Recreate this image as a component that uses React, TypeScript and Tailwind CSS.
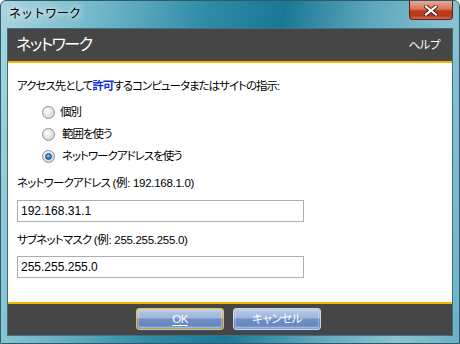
import React from "react";

const font = { fontFamily: '"Liberation Sans", "Noto Sans CJK JP", sans-serif' };

function Radio({ checked, label, labelPad }: { checked?: boolean; label: string; labelPad: string }) {
  return (
    <div className="flex h-[22px] items-center pl-[25px]">
      <div className="flex h-[13px] w-[13px] items-center justify-center rounded-full border border-[#8f9090] bg-[radial-gradient(circle_at_40%_35%,#ffffff_0%,#e6e6e6_45%,#c8c8c8_100%)]">
        {checked && (
          <div className="h-[7px] w-[7px] rounded-full border border-[#1d4f86] bg-[radial-gradient(circle_at_45%_40%,#8fd0ff_0%,#2a86d8_50%,#0d4f98_100%)]" />
        )}
      </div>
      <span className={`${labelPad} text-[11.5px] leading-[16px] tracking-[-1px] text-black`}>{label}</span>
    </div>
  );
}

function Btn({ children, def }: { children: React.ReactNode; def?: boolean }) {
  return (
    <div className="flex flex-col">
      <div
        className={`relative flex h-[22px] w-[88px] items-center justify-center overflow-hidden rounded-[3px] border ${
          def ? "border-[#f6c21f]" : "border-[#c9d6ee]"
        } bg-[linear-gradient(to_bottom,#b9cae6_0%,#9db4dc_45%,#6f8fc6_50%,#6788c0_80%,#8aa6d4_100%)]`}
      >
        <div className="absolute inset-[1px] rounded-[2px] border border-[#dbe5f6]/40" />
        <span className="relative text-[11.5px] leading-[14px] tracking-[-0.5px] text-white">{children}</span>
      </div>
      <div className="mx-[2px] h-[1px] bg-[#2c4f86]" />
    </div>
  );
}

export default function App() {
  return (
    <div
      style={font}
      className="relative flex h-[344px] w-[460px] flex-col overflow-hidden rounded-t-[6px] border border-[#2c5b6a] bg-[linear-gradient(100deg,#a9d5df_0%,#6fb6c8_20%,#2f8ba6_40%,#1a7896_55%,#5ea7bd_72%,#8bc2d1_88%,#6cb1c4_100%)]"
    >
      <div className="flex h-[27px] shrink-0 items-start justify-between">
        <span className="ml-[6px] mt-[5px] px-[2px] text-[12px] leading-[16px] text-black [text-shadow:0_0_6px_#ffffff,0_0_10px_#ffffff]">
          ネットワーク
        </span>
        <div className="mr-[6px] flex h-[19px] w-[44px] items-center justify-center rounded-b-[4px] border border-t-0 border-[#5b2318] bg-[linear-gradient(to_bottom,#e9a796_0%,#d8735c_45%,#c2391c_55%,#b8371e_80%,#d06b50_100%)]">
          <svg width="14" height="11" viewBox="0 0 14 11">
            <path d="M2 1.5 L12 9.5 M12 1.5 L2 9.5" stroke="#4a1a10" strokeWidth="4" strokeLinecap="square" />
            <path d="M2 1.5 L12 9.5 M12 1.5 L2 9.5" stroke="#ffffff" strokeWidth="2.2" strokeLinecap="square" />
          </svg>
        </div>
      </div>
      <div className="mx-[6px] mb-[7px] flex flex-1 flex-col border border-[#3c6f80] bg-white [font-feature-settings:'palt']">
        <div className="flex h-[34px] shrink-0 items-center justify-between border-b-2 border-[#f6b700] bg-[#464646] pl-[8px] pr-[12px]">
          <span className="text-[16px] leading-[20px] tracking-[-1.5px] text-white">ネットワーク</span>
          <span className="text-[11.5px] leading-[16px] tracking-[-0.5px] text-white">ヘルプ</span>
        </div>
        <div className="flex h-[241px] shrink-0 flex-col border-b-2 border-[#f6b700] bg-white pl-[9px] pt-[15px]">
          <div className="text-[11.5px] leading-[16px] tracking-[-1px] text-black">
            アクセス先として<span className="font-bold text-[#1630d8]">許可</span>するコンピュータまたはサイトの指示:
          </div>
          <div className="mt-[7px] flex flex-col">
            <Radio label="個別" labelPad="pl-[5px]" />
            <Radio label="範囲を使う" labelPad="pl-[7px]" />
            <Radio checked label="ネットワークアドレスを使う" labelPad="pl-[7px]" />
          </div>
          <div className="mt-[8px] text-[11.5px] leading-[16px] tracking-[-0.8px] text-black">
            ネットワークアドレス <span className="tracking-[-0.3px]">(例: 192.168.1.0)</span>
          </div>
          <div className="mt-[9px] flex h-[22px] w-[287px] items-center border border-[#abadb3] pl-[3px] text-[12px] text-black">
            192.168.31.1
          </div>
          <div className="mt-[10px] text-[11.5px] leading-[16px] tracking-[-0.8px] text-black">
            サブネットマスク <span className="tracking-[-0.3px]">(例: 255.255.255.0)</span>
          </div>
          <div className="mt-[8px] flex h-[22px] w-[287px] items-center border border-[#abadb3] pl-[3px] text-[12px] text-black">
            255.255.255.0
          </div>
        </div>
        <div className="flex flex-1 items-start gap-[9px] bg-[#464646] pl-[128px] pt-[4px]">
          <Btn def>
            <span className="underline underline-offset-2">OK</span>
          </Btn>
          <Btn>キャンセル</Btn>
        </div>
      </div>
    </div>
  );
}
